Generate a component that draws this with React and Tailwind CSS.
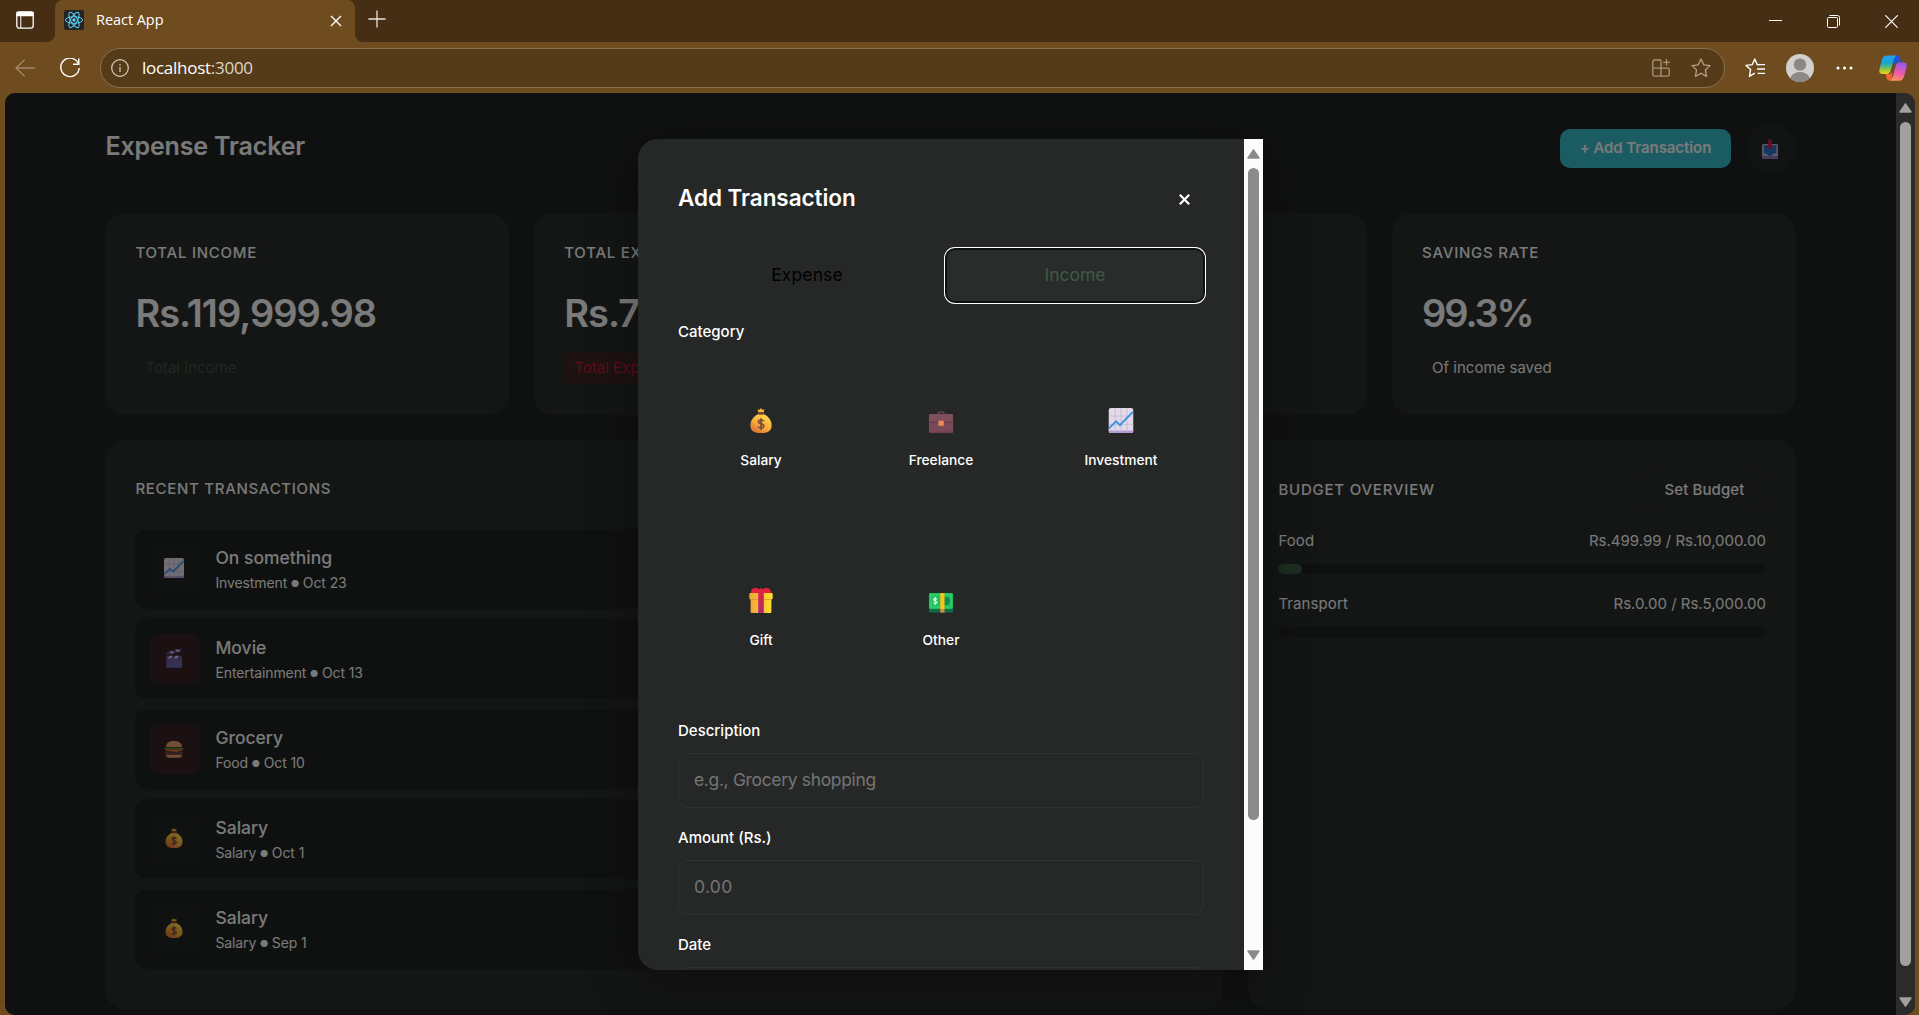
import React from "react";

/* ---------- emoji drawings ---------- */

const MoneyBag = ({ className }) => (
  <svg viewBox="0 0 22 25" className={className}>
    <defs>
      <linearGradient id="bag" x1="0.8" y1="0.1" x2="0.2" y2="1">
        <stop offset="0" stopColor="#ffd84a" />
        <stop offset="0.55" stopColor="#f7a938" />
        <stop offset="1" stopColor="#d86a3a" />
      </linearGradient>
    </defs>
    <path d="M7.6 1.6 L9.8 1.8 L11 0 L12.2 1.8 L14.4 1.6 L13.6 4.4 H8.4 Z" fill="#ffb52e" />
    <path d="M8.6 6 C4 8 0.4 12 0.4 17.4 C0.4 22.6 4 25 11 25 C18 25 21.6 22.6 21.6 17.4 C21.6 12 18 8 13.4 6 Z" fill="url(#bag)" />
    <rect x="8" y="3.9" width="6" height="2.8" rx="1" fill="#7d4533" />
    <path d="M13.9 13.2 C13.2 11.9 8.4 11.6 8.4 14 C8.4 16.4 13.8 15.2 13.8 17.9 C13.8 20.4 8.8 20.1 8 18.6 M11 10.2 V22" fill="none" stroke="#7d4a3c" strokeWidth="1.7" />
  </svg>
);

const Briefcase = ({ className }) => (
  <svg viewBox="0 0 25 25" className={className}>
    <path d="M9.6 6.4 V5 C9.6 3.6 15.4 3.6 15.4 5 V6.4" fill="none" stroke="#6b4148" strokeWidth="1.6" />
    <rect x="0.3" y="6" width="24.4" height="19" rx="1.6" fill="#7a4a58" />
    <path d="M0.8 14 V7.6 Q0.8 6.2 2.2 6.2 H22.8 Q24.2 6.2 24.2 7.6 V14 Z" fill="#80505a" />
    <path d="M0.8 14.2 H24.2" stroke="#5f3147" strokeWidth="0.9" />
    <rect x="9.9" y="12.8" width="5.4" height="5" rx="0.6" fill="#f08a5c" />
    <path d="M0.8 24.2 H24.2" stroke="#693c54" strokeWidth="1" />
  </svg>
);

const Chart = ({ className }) => (
  <svg viewBox="0 0 25 25" className={className}>
    <rect width="25" height="25" rx="2.6" fill="#e2d9ea" />
    <path d="M2 22.6 H23 Q25 22.6 25 21 V22.4 Q25 25 22.4 25 H2.6 Q0 25 0 22.4 V21 Q0 22.6 2 22.6Z" fill="#b39ad0" />
    <path d="M6.6 0 V24 M12.6 0 V24 M18.6 0 V24 M0 8 H25 M0 16.4 H25" stroke="#c5bccf" strokeWidth="0.9" />
    <path d="M0.4 20.4 L7.6 13.4 L11.4 17.2 L24.6 3.6" fill="none" stroke="#3796e2" strokeWidth="1.9" />
  </svg>
);

const Gift = ({ className }) => (
  <svg viewBox="0 0 24 25" className={className}>
    <defs>
      <linearGradient id="gift" x1="0" x2="1">
        <stop offset="0" stopColor="#f3a43a" />
        <stop offset="1" stopColor="#fbe02e" />
      </linearGradient>
      <linearGradient id="ribbon" x1="0" x2="0" y1="0" y2="1">
        <stop offset="0" stopColor="#e3213c" />
        <stop offset="1" stopColor="#b32a78" />
      </linearGradient>
    </defs>
    <rect x="1.6" y="10" width="20.8" height="15" rx="1.2" fill="url(#gift)" />
    <rect x="0.3" y="5" width="23.4" height="6.2" rx="1" fill="url(#gift)" />
    <path d="M1.6 11.6 H22.4" stroke="#d98f2c" strokeWidth="0.8" />
    <path d="M2 5 C1.6 -0.6 7.4 -1.2 10.2 1.4 C12 -0.2 12 -0.2 13.8 1.4 C16.6 -1.2 22.4 -0.6 22 5 Z" fill="#e3213c" />
    <rect x="9.2" y="1.2" width="5.6" height="23.8" fill="url(#ribbon)" />
  </svg>
);

const Cash = ({ className }) => (
  <svg viewBox="0 0 25 25" className={className}>
    <rect x="0.4" y="8" width="24.2" height="16.6" rx="1.4" fill="#0d6d49" />
    <rect x="0.4" y="5" width="24.2" height="16" rx="1.4" fill="#1fbf5d" />
    <rect x="2.4" y="7" width="20.2" height="12" fill="none" stroke="#35d874" strokeWidth="1" />
    <circle cx="17.4" cy="13" r="4.2" fill="#178a50" />
    <path d="M8.6 11.4 C8 10.4 5 10.3 5 11.8 C5 13.4 8.6 12.6 8.6 14.3 C8.6 15.8 5.4 15.8 4.8 14.7 M6.8 9 V17" fill="none" stroke="#d8f7df" strokeWidth="1.2" />
    <rect x="11.8" y="5" width="4.2" height="16" fill="#fcc21b" />
    <rect x="11.8" y="21" width="4.2" height="3.6" fill="#d98a3a" />
  </svg>
);

const Clapper = ({ className }) => (
  <svg viewBox="0 0 24 25" className={className}>
    <defs>
      <linearGradient id="clap" x1="0" x2="0" y1="0" y2="1">
        <stop offset="0" stopColor="#70528f" />
        <stop offset="1" stopColor="#6a68b8" />
      </linearGradient>
    </defs>
    <path d="M2 5.6 L20.4 0.4 L21.6 4 L3.2 9.2 Z" fill="#64478a" />
    <path d="M6 4.6 L9.4 7.2 L12.4 6.3 L9 3.7 Z M13.4 2.5 L16.8 5.1 L19.8 4.2 L16.4 1.6 Z" fill="#d9c8ec" />
    <rect x="2.4" y="9.6" width="19.6" height="15.2" rx="1.2" fill="url(#clap)" />
    <path d="M6.6 9.8 H10.4 L8 13 H4.2 Z M14.2 9.8 H18 L15.6 13 H11.8 Z" fill="#d9c8ec" />
  </svg>
);

const Burger = ({ className }) => (
  <svg viewBox="0 0 25 25" className={className}>
    <path d="M2.4 11.5 C2.4 5.6 7 3.6 12.5 3.6 C18 3.6 22.6 5.6 22.6 11.5 Z" fill="#dd9d66" />
    <path d="M7 7.4 H8.6 M11.6 5.8 H13 M16 7.6 H17.6 M12 9.2 H13.4" stroke="#f6dba8" strokeWidth="1" />
    <path d="M0.6 12.4 H24.4 V13.6 Q21.6 15 19.4 13.6 H5.4 Q3 15.2 0.6 13.8 Z" fill="#41a83e" />
    <path d="M1.8 14 H23.2 V16.2 H1.8 Z" fill="#c8442e" />
    <path d="M3 15.6 H22 L15 17.6 Z" fill="#fbc82e" />
    <rect x="1" y="17" width="23" height="3.6" rx="1.8" fill="#6e4038" />
    <path d="M2.6 20.8 H22.4 Q22.4 24.6 19.6 24.6 H5.4 Q2.6 24.6 2.6 20.8 Z" fill="#e09a72" />
  </svg>
);

const Inbox = ({ className }) => (
  <svg viewBox="0 0 16 20" className={className}>
    <rect y="5" width="16" height="15" rx="1.6" fill="#bfb2d4" />
    <path d="M0 17 H16 V20 H0 Z" fill="#8c76ac" />
    <path d="M1.6 6.2 H14.4 V14.4 H11.4 L9.6 16.8 H6.4 L4.6 14.4 H1.6 Z" fill="#2272be" />
    <path d="M6.2 0.2 H9.8 V6.4 H12 L8 11 L4 6.4 H6.2 Z" fill="#c81e50" />
  </svg>
);

/* ---------- browser chrome ---------- */

const ReactLogo = () => (
  <svg viewBox="0 0 20 20" className="size-5 shrink-0">
    <rect width="20" height="20" rx="2" fill="#222426" />
    <g fill="none" stroke="#5ccfee" strokeWidth="1">
      <ellipse cx="10" cy="10" rx="8.6" ry="3.3" />
      <ellipse cx="10" cy="10" rx="8.6" ry="3.3" transform="rotate(60 10 10)" />
      <ellipse cx="10" cy="10" rx="8.6" ry="3.3" transform="rotate(120 10 10)" />
    </g>
    <circle cx="10" cy="10" r="1.7" fill="#5ccfee" />
  </svg>
);

const Flare = ({ flip }) => (
  <svg viewBox="0 0 8 8" className={flip ? "size-2 self-end" : "size-2 self-end -scale-x-100"}>
    <path d="M0 0 V8 H8 A8 8 0 0 1 0 0 Z" fill="#6f4c1f" />
  </svg>
);

const STAR = "M10 1 L12.7 6.8 L19 7.6 L14.4 11.9 L15.6 18.4 L10 15.2 L4.4 18.4 L5.6 11.9 L1 7.6 L7.3 6.8 Z";

function TabStrip() {
  return (
    <div className="flex h-[42px] shrink-0 bg-[#462e14] text-white">
      <div className="flex w-[47px] items-center pl-4">
        <svg viewBox="0 0 18 18" className="mt-[-2px] size-[18px]" fill="none" stroke="#fff" strokeWidth="1.3">
          <rect x="0.8" y="0.8" width="16.4" height="16.4" rx="2.6" />
          <path d="M1 1.5 H17 V4.6 H1 Z" fill="#fff" />
          <path d="M4.8 5 V17" strokeWidth="1" />
        </svg>
      </div>
      <Flare />
      <div className="flex w-[300px] items-center rounded-t-lg bg-[#6f4c1f] pb-[2px] pl-[9px] pr-[13px]">
        <ReactLogo />
        <span className="ml-3 flex-1 text-[14.5px] tracking-[-0.05px]">React App</span>
        <svg viewBox="0 0 12 12" className="mt-[2px] size-3" fill="none" stroke="#fff" strokeWidth="1.4">
          <path d="M1 1 L11 11 M11 1 L1 11" />
        </svg>
      </div>
      <Flare flip />
      <svg viewBox="0 0 18 18" className="ml-[5px] mt-[10px] size-[18px]" fill="none" stroke="#e8e2da" strokeWidth="1.3">
        <path d="M9 0.4 V17.6 M0.4 9 H17.6" />
      </svg>
      <div className="ml-auto flex gap-[45px] pr-[21px] pt-[15px]">
        <svg viewBox="0 0 13 13" className="size-[13px]" stroke="#fff"><path d="M0 5.5 H13" /></svg>
        <svg viewBox="0 0 13 13" className="size-[13px]" fill="none" stroke="#fff">
          <path d="M2.5 0.5 H10.5 Q12.5 0.5 12.5 2.5 V10.5" />
          <rect x="0.5" y="2.5" width="10" height="10" rx="1" />
        </svg>
        <svg viewBox="0 0 13 13" className="size-[13px]" stroke="#fff" strokeWidth="1.2"><path d="M0.3 0.3 L12.7 12.7 M12.7 0.3 L0.3 12.7" /></svg>
      </div>
    </div>
  );
}

function Toolbar() {
  return (
    <div className="flex h-[51px] shrink-0 items-center bg-[#6f4c1f]">
      <svg viewBox="0 0 20 18" className="ml-[15px] h-[18px] w-5" fill="none" stroke="#a38a68" strokeWidth="1.3">
        <path d="M20 9 H1 M9.6 0.8 L1 9 L9.6 17.2" />
      </svg>
      <svg viewBox="0 0 20 20" className="ml-[25px] size-5" fill="none" stroke="#fff" strokeWidth="1.4">
        <path d="M18.6 6 A9.2 9.2 0 1 0 19.2 10" />
        <path d="M18.8 0.4 V6.2 H13" />
      </svg>
      <div className="ml-5 flex h-10 w-[1625px] items-center rounded-full border border-[#8b714f] bg-[#563b19] pl-[10px] pr-[13px]">
        <svg viewBox="0 0 18 18" className="size-[18px]" fill="none" stroke="#d9cdbd" strokeWidth="1.2">
          <circle cx="9" cy="9" r="8.3" />
          <path d="M9 8 V13" />
          <path d="M9 5 V6.4" />
        </svg>
        <span className="ml-[13px] flex-1 text-[17px] leading-6 tracking-[-0.27px] text-white">
          localhost<span className="text-[#ddd5ca]">:3000</span>
        </span>
        <svg viewBox="0 0 18 18" className="size-[18px]" fill="none" stroke="#a8947a" strokeWidth="1.3">
          <path d="M9 1 H2.6 Q0.8 1 0.8 2.8 V15.4 Q0.8 17.2 2.6 17.2 H15.4 Q17.2 17.2 17.2 15.4 V9.4 M9 1 V17 M0.8 9.2 H17 M14.5 0 V6.6 M11.2 3.3 H17.8" />
        </svg>
        <svg viewBox="0 0 20 20" className="ml-[21px] size-5" fill="none" stroke="#b5a289" strokeWidth="1.3" strokeLinejoin="round">
          <path d={STAR} />
        </svg>
      </div>
      <svg viewBox="0 0 20 20" className="ml-5 size-5" fill="none" stroke="#fff" strokeWidth="1.4" strokeLinejoin="round">
        <path d="M14.4 6.8 L12.2 6.6 L9.8 1 L7.2 6.6 L1 7.4 L5.6 11.6 L4.4 18.4 L9.8 15.2" />
        <path d="M14 6.6 H20 M12 11 H20 M12.6 15.4 H20" />
      </svg>
      <svg viewBox="0 0 28 28" className="ml-[21px] size-7">
        <clipPath id="av"><circle cx="14" cy="14" r="14" /></clipPath>
        <g clipPath="url(#av)">
          <rect width="28" height="28" fill="#d2d0ce" />
          <circle cx="14" cy="10.6" r="6.2" fill="#8b8886" />
          <ellipse cx="14" cy="25.4" rx="9.8" ry="7.4" fill="#8b8886" />
        </g>
      </svg>
      <svg viewBox="0 0 17 4" className="ml-[22px] h-1 w-[17px]" fill="#fff">
        <circle cx="2" cy="2" r="1.5" /><circle cx="8.5" cy="2" r="1.5" /><circle cx="15" cy="2" r="1.5" />
      </svg>
      <svg viewBox="0 0 28 26" className="ml-[26px] h-[26px] w-7">
        <defs>
          <linearGradient id="cpA" x1="0" y1="0" x2="0" y2="1">
            <stop offset="0" stopColor="#22a0f2" /><stop offset="0.45" stopColor="#1aa9c8" />
            <stop offset="0.75" stopColor="#8fc53c" /><stop offset="1" stopColor="#f7d21a" />
          </linearGradient>
          <linearGradient id="cpB" x1="0.2" y1="0" x2="0" y2="1">
            <stop offset="0" stopColor="#a058ea" /><stop offset="0.5" stopColor="#ee5aa8" />
            <stop offset="1" stopColor="#ffa04a" />
          </linearGradient>
        </defs>
        <path d="M15 0.6 H18.4 Q20.4 0.6 21.2 4 L22.2 7.6 H18 Q15.4 7.6 14.4 10.4 Z" fill="#1f52d8" />
        <path d="M6.6 19 H10.6 Q12.6 19 13.4 16 L12.6 25.6 H10.4 Q8 25.6 7.4 22.6 Z" fill="#f2603a" />
        <path d="M8 0.4 H17.4 Q15.6 1.4 14.6 5 L11.8 15 Q10.8 19 7.6 19 H3.6 Q-0.4 19 0.4 14.4 L3 4.4 Q4.2 0.4 8 0.4 Z" fill="url(#cpA)" />
        <path d="M20.4 7.4 H24.6 Q28.4 7.4 27.6 12 L25 21.8 Q23.8 25.8 20 25.8 H10.8 Q13 24.6 14 21.2 L16.6 11.2 Q17.6 7.4 20.4 7.4 Z" fill="url(#cpB)" />
      </svg>
    </div>
  );
}

const Arrow = ({ down, className }) => (
  <svg viewBox="0 0 13 10" className={down ? "w-[13px] h-[10px] shrink-0 rotate-180" : "w-[13px] h-[10px] shrink-0"}>
    <path d="M6.5 0.8 L12 9 H1 Z" strokeWidth="1.4" strokeLinejoin="round" className={className} />
  </svg>
);

/* ---------- dashboard ---------- */

const stats = [
  { label: "TOTAL INCOME", value: "Rs.119,999.98", track: "tracking-[-1px]", note: "Total Income", pill: "bg-[#262c29] text-[#3a533e]" },
  { label: "TOTAL EXPENSES", value: "Rs.799.99", track: "tracking-[-1px]", note: "Total Expenses", pill: "bg-[#3c2427] text-[#bc1830]" },
  { label: "BALANCE", value: "Rs.119,199.99", track: "tracking-[-1px]", note: "Net Balance", pill: "text-[#f5f5f5]" },
  { label: "SAVINGS RATE", value: "99.3%", track: "tracking-[-2.1px]", note: "Of income saved", pill: "text-[#ececec]" },
];

const transactions = [
  { Icon: Chart, title: "On something", cat: "Investment", date: "Oct 23", box: "bg-[#212523]" },
  { Icon: Clapper, title: "Movie", cat: "Entertainment", date: "Oct 13", box: "bg-[#372124]" },
  { Icon: Burger, title: "Grocery", cat: "Food", date: "Oct 10", box: "bg-[#372124]" },
  { Icon: MoneyBag, title: "Salary", cat: "Salary", date: "Oct 1", box: "bg-[#212523]" },
  { Icon: MoneyBag, title: "Salary", cat: "Salary", date: "Sep 1", box: "bg-[#212523]" },
];

function Budget({ name, amount, fill }) {
  return (
    <div>
      <div className="flex h-5 items-center justify-between text-[15px]">
        <span className="tracking-[0.1px]">{name}</span>
        <span>{amount}</span>
      </div>
      <div className="mt-[13px] h-[10px] overflow-hidden rounded-full bg-[#1e2220]">
        {fill && <div className="h-full w-6 rounded-full bg-[#3a5a40]" />}
      </div>
    </div>
  );
}

function Dashboard() {
  return (
    <div className="h-full bg-[#1e2220] pl-[100.4px] pr-[100px] pt-[30px] text-[#f4f4f4]">
      <header className="flex h-[50px] items-center">
        <h1 className="-mt-[2px] text-[25px] font-semibold tracking-[-0.15px]">Expense Tracker</h1>
        <div className="ml-auto mt-px flex h-[39px] w-[171px] items-center justify-center rounded-[10px] bg-[#36b8c4] text-[15px] font-semibold tracking-[-0.08px]">
          + Add Transaction
        </div>
        <div className="ml-[15px] flex size-[50px] items-center justify-center rounded-full bg-[#242826]">
          <Inbox className="h-5 w-4 -translate-x-px translate-y-px" />
        </div>
      </header>

      <section className="mt-10 grid grid-cols-4 gap-[25px]">
        {stats.map((s) => (
          <div key={s.label} className="h-[202px] overflow-hidden whitespace-nowrap rounded-[20px] bg-[#282c2a] px-[30px] pt-[30px]">
            <div className="text-[15px] font-medium leading-5 tracking-[0.75px]">{s.label}</div>
            <div className={`mt-[26.5px] text-[38px] font-semibold leading-[46px] ${s.track}`}>{s.value}</div>
            <div className={`mt-[16.5px] inline-flex h-8 items-center rounded-[5px] px-[10px] text-[15px] ${s.pill}`}>{s.note}</div>
          </div>
        ))}
      </section>

      <section className="mt-[25px] grid grid-cols-[1118px_1fr] gap-[25px]">
        <div className="h-[569px] rounded-[20px] bg-[#282c2a] px-[30px] pt-[39px]">
          <div className="text-[15px] font-medium leading-5 tracking-[0.7px]">RECENT TRANSACTIONS</div>
          <div className="mt-[30px] flex flex-col gap-[10px]">
            {transactions.map((t) => (
              <div key={t.title + t.date} className="flex h-20 items-center gap-[15px] rounded-xl bg-[#1e2220] px-[15px]">
                <div className={`flex size-[50px] items-center justify-center rounded-[10px] ${t.box}`}>
                  <t.Icon className="size-5 -translate-x-px -translate-y-px" />
                </div>
                <div className="pt-[2px]">
                  <div className="text-[17.5px] font-medium leading-6">{t.title}</div>
                  <div className="mt-[1px] flex items-center text-[14px] leading-6 tracking-[-0.1px]">
                    {t.cat}
                    <span className="mx-[3.5px] mt-[2px] text-[9.5px] leading-none">●</span>
                    {t.date}
                  </div>
                </div>
              </div>
            ))}
          </div>
        </div>

        <div className="h-[569px] rounded-[20px] bg-[#282c2a] px-[30px] pt-[30px]">
          <div className="flex h-[41px] items-center justify-between">
            <span className="text-[15px] font-medium tracking-[0.78px]">BUDGET OVERVIEW</span>
            <span className="flex h-[41px] w-[123px] items-center justify-center rounded-[10px] border border-[#2f3230] text-[15px] font-medium tracking-[0.1px]">Set Budget</span>
          </div>
          <div className="mt-5 flex flex-col gap-5">
            <Budget name="Food" amount="Rs.499.99 / Rs.10,000.00" fill />
            <Budget name="Transport" amount="Rs.0.00 / Rs.5,000.00" />
          </div>
        </div>
      </section>
    </div>
  );
}

/* ---------- modal ---------- */

const categories = [
  { Icon: MoneyBag, name: "Salary" },
  { Icon: Briefcase, name: "Freelance" },
  { Icon: Chart, name: "Investment" },
  { Icon: Gift, name: "Gift" },
  { Icon: Cash, name: "Other" },
];

function Field({ label, placeholder, track }) {
  return (
    <div>
      <div className="text-[15px] font-medium leading-5">{label}</div>
      <div className={`mt-[12px] flex h-[55px] items-center rounded-[10px] border border-[#303131] px-[15px] text-[17.5px] text-[#757575] ${track}`}>
        {placeholder}
      </div>
    </div>
  );
}

function Modal() {
  return (
    <div className="flex h-[831px] w-[625px] overflow-hidden rounded-l-[20px] bg-[#262827] text-white shadow-[0_10px_50px_rgba(0,0,0,0.35)]">
      <div className="flex-1 px-10 pt-[45px]">
        <div className="flex h-7 items-center justify-between pr-[14px]">
          <h2 className="text-[22.5px] font-semibold tracking-[-0.05px]">Add Transaction</h2>
          <svg viewBox="0 0 11 11" className="mt-[2px] size-[11px]" stroke="#fff" strokeWidth="2.2"><path d="M0.8 0.8 L10.2 10.2 M10.2 0.8 L0.8 10.2" /></svg>
        </div>
        <div className="mt-[37px] grid grid-cols-2 gap-[10px] text-[17.5px]">
          <div className="flex h-[53px] items-center justify-center tracking-[0.1px] text-black">Expense</div>
          <div className="flex h-[53px] items-center justify-center rounded-[9px] bg-[#282c2b] text-[#3e5a42] shadow-[0_0_0_1px_#101010,0_0_0_2px_#fff,inset_0_0_0_1px_#101010]">Income</div>
        </div>
        <div className="mt-[20px] text-[15px] font-medium leading-5">Category</div>
        <div className="mt-[10px] grid grid-cols-3 gap-[14px] text-[13.75px] font-medium">
          {categories.map((c) => (
            <div key={c.name} className="flex h-[166px] flex-col items-center pt-[56px]">
              <c.Icon className="size-[25px] -translate-x-[0.5px]" />
              <span className="mt-[17px] leading-5">{c.name}</span>
            </div>
          ))}
        </div>
        <div className="mt-[22.5px] flex flex-col gap-5">
          <Field label="Description" placeholder="e.g., Grocery shopping" track="tracking-[-0.35px]" />
          <Field label="Amount (Rs.)" placeholder="0.00" track="tracking-[0.3px]" />
          <Field label="Date" placeholder="" track="" />
        </div>
      </div>
      <div className="flex w-[19px] flex-col items-center bg-[#fcfcfc] py-[10px]">
        <Arrow className="fill-[#8b8b8b] stroke-[#8b8b8b]" />
        <div className="mt-[9px] h-[652px] w-[11px] rounded-full bg-[#8b8b8b]" />
        <div className="mt-auto flex"><Arrow down className="fill-[#8b8b8b] stroke-[#8b8b8b]" /></div>
      </div>
    </div>
  );
}

export default function App() {
  return (
    <div className="flex h-[1015px] w-[1919px] flex-col overflow-hidden bg-[#6f4c1f] font-['Open_Sans',sans-serif]">
      <TabStrip />
      <Toolbar />
      <div className="ml-[5px] mr-1 flex h-[922px] overflow-hidden rounded-[10px] font-['Inter',sans-serif]">
        <div className="relative h-full w-[1891px] overflow-hidden">
          <Dashboard />
          <div className="absolute inset-0 flex items-start justify-center bg-black/50 pt-[46px]">
            <Modal />
          </div>
        </div>
        <div className="flex w-[19px] flex-col items-center bg-[#2b2b2c] pb-2 pt-[10px]">
          <Arrow className="fill-[#a0a0a0] stroke-[#a0a0a0]" />
          <div className="mt-[9px] h-[844px] w-[11px] rounded-full bg-[#a0a0a0]" />
          <div className="mt-auto flex"><Arrow down className="fill-[#a0a0a0] stroke-[#a0a0a0]" /></div>
        </div>
      </div>
    </div>
  );
}
